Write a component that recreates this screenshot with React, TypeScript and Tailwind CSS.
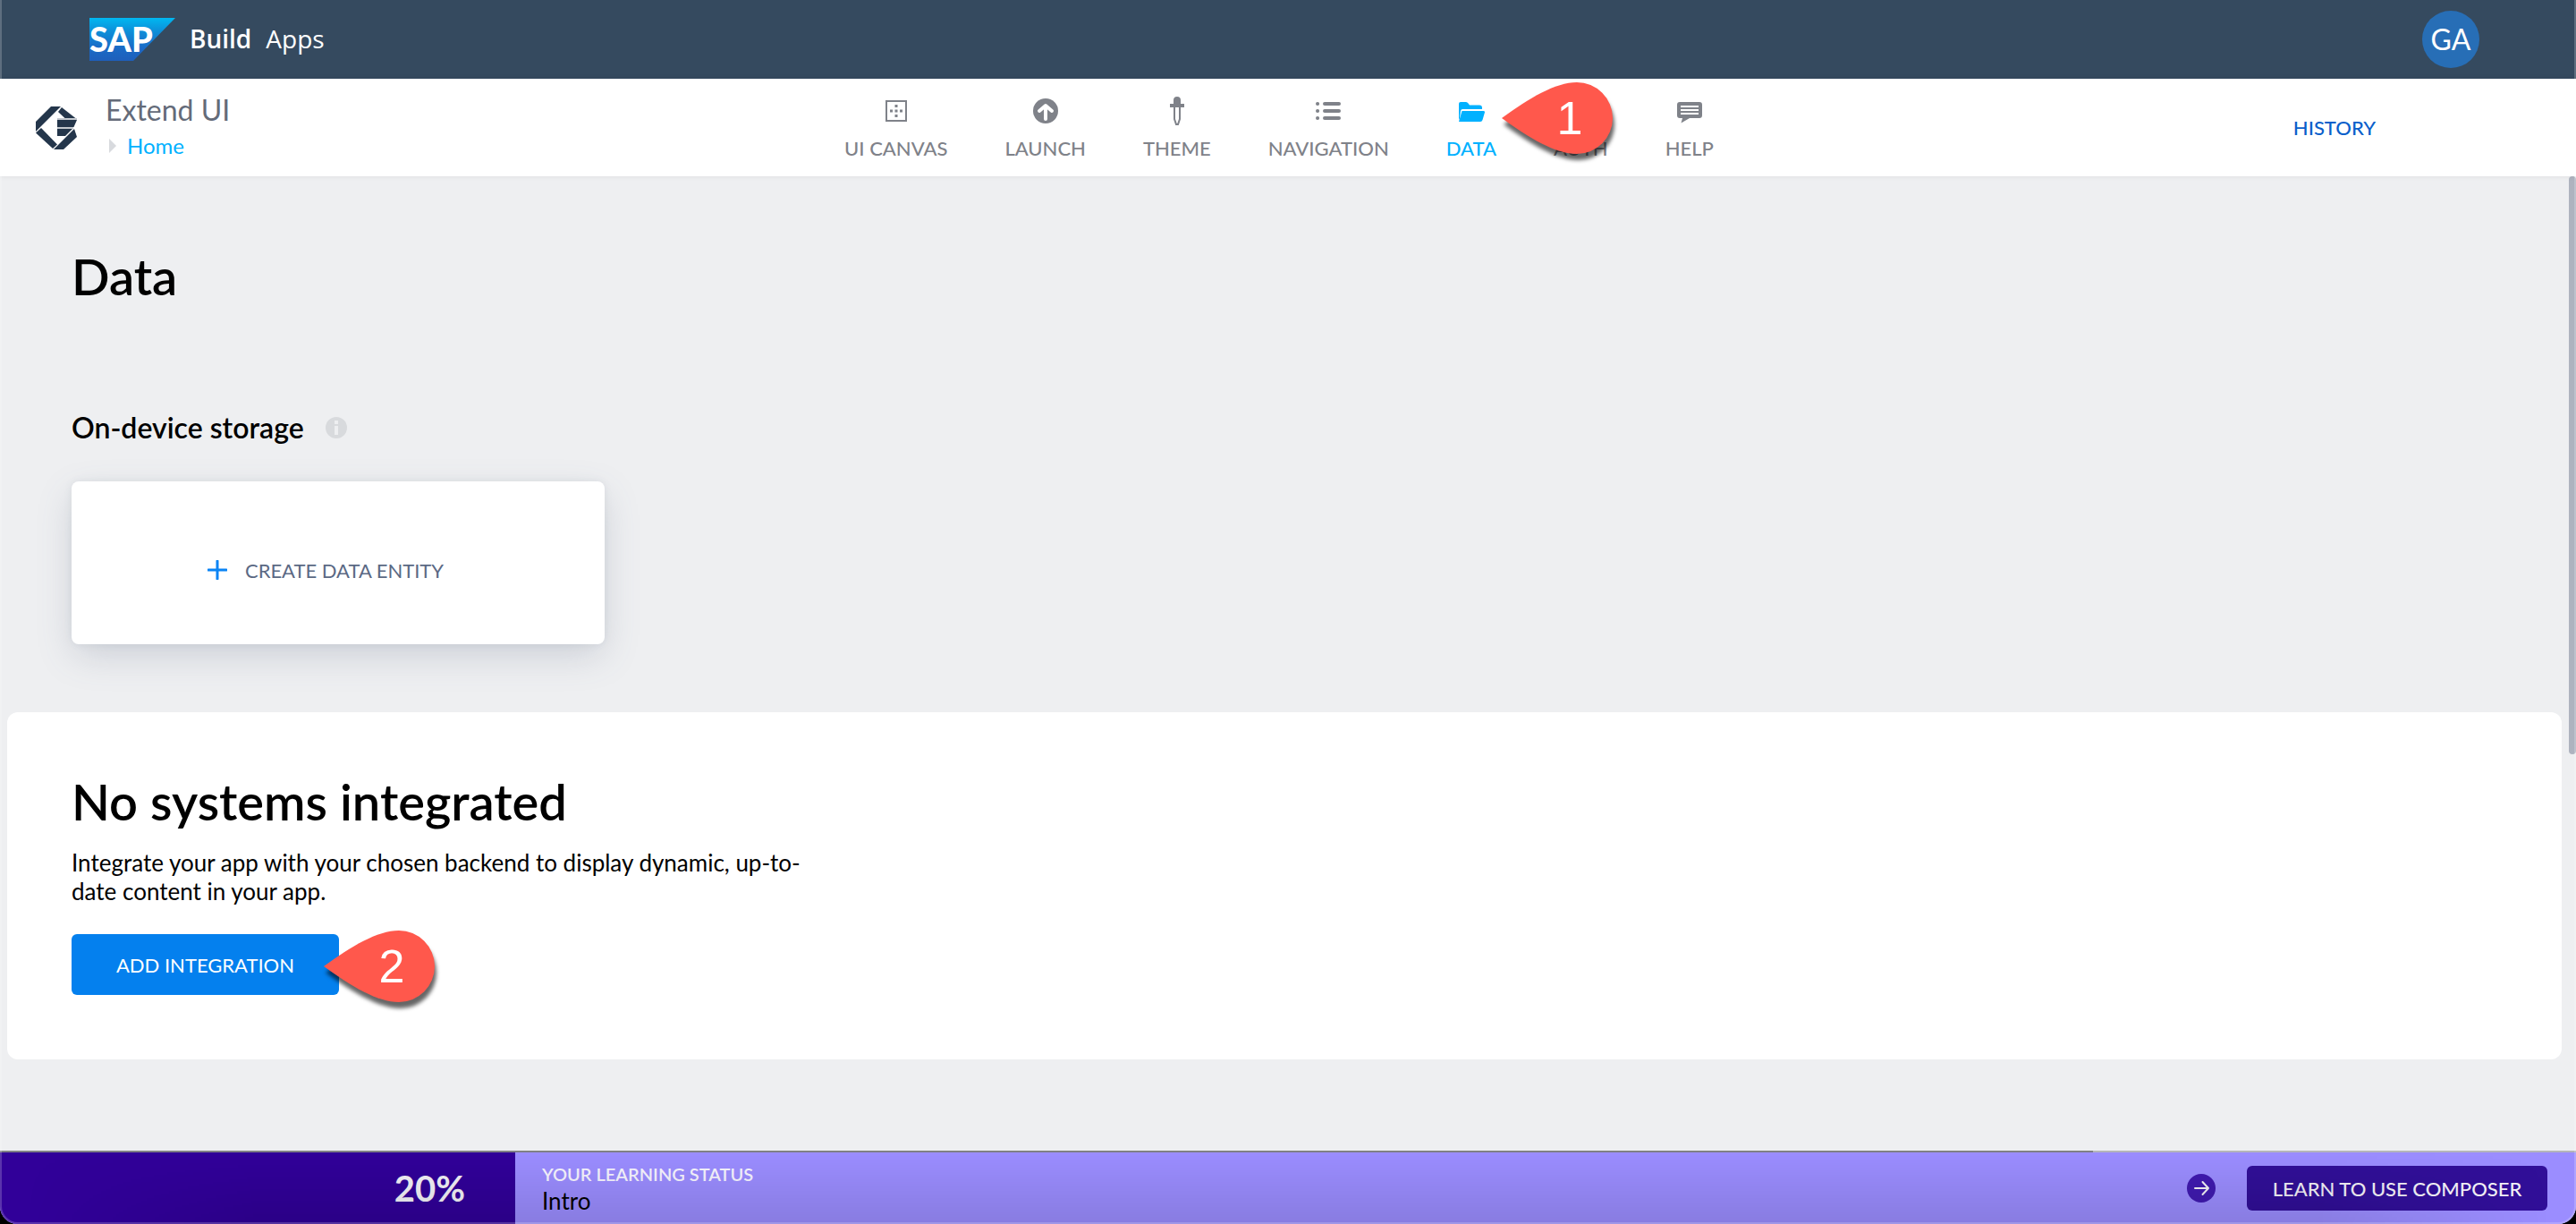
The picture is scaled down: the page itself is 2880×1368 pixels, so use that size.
import type { ReactNode } from "react";

function SapLogo() {
  return (
    <svg width="96" height="48" viewBox="0 0 96 48" role="img" aria-label="SAP" className="overflow-visible">
      <defs>
        <linearGradient id="sap" x1="0" y1="0" x2="0" y2="1">
          <stop offset="0" stopColor="#00b8f1" />
          <stop offset="0.3" stopColor="#0d90d9" />
          <stop offset="0.7" stopColor="#1a6ac6" />
          <stop offset="1" stopColor="#1e5fbb" />
        </linearGradient>
      </defs>
      <path d="M0 0H96L49 48H0Z" fill="url(#sap)" />
      <text x="0" y="38" fontSize="38" fontWeight="900" fill="#fff" fontFamily="Lato, sans-serif">
        SAP
      </text>
    </svg>
  );
}

function AppLogo() {
  return (
    <svg width="46" height="48" viewBox="0 0 46 48" aria-hidden="true">
      <g fill="#24364b">
        <path d="M17 0H28L0 28V17Z" />
        <path d="M29 1L45 13.5H33L25 6Z" />
        <path d="M24 15H46L42.5 23H24Z" />
        <path d="M24 25H41L33 33H24Z" />
        <path d="M6 24L24 42.5L19 47L0 29.5Z" />
        <path d="M43 25L46 34L31 48H20Z" />
      </g>
      <path d="M24 14H46M24 24H42" stroke="#c3c8ce" strokeWidth="2" />
    </svg>
  );
}

const iconBox = { width: 32, height: 32, viewBox: "0 0 32 32", "aria-hidden": true } as const;

const CanvasIcon = () => (
  <svg {...iconBox}>
    <rect x="5" y="5" width="22" height="22" fill="none" stroke="currentColor" strokeWidth="2" />
    <path
      fill="currentColor"
      d="M14.500 9h3v3h-3zM14.500 14.500h3v3h-3zM14.500 20h3v3h-3zM9 14.500h3v3h-3zM20 14.500h3v3h-3z"
    />
  </svg>
);

const LaunchIcon = () => (
  <svg {...iconBox}>
    <circle cx="16" cy="16" r="14" fill="currentColor" />
    <path d="M16 25V11M9 16L16 10L23 16" fill="none" stroke="#fff" strokeWidth="4" strokeLinecap="round" strokeLinejoin="round" />
  </svg>
);

const ThemeIcon = () => (
  <svg {...iconBox}>
    <path d="M12 8V4Q12 0 16 0Q20 0 20 4V8H24V12H8V8Z" fill="currentColor" />
    <path d="M13 12V25L15 31H17L19 25V12" fill="none" stroke="currentColor" strokeWidth="2" />
  </svg>
);

const NavigationIcon = () => (
  <svg {...iconBox}>
    <g stroke="currentColor" strokeWidth="4" strokeLinecap="round">
      <path d="M12 8H28M12 16H28M12 24H28M4 8H4.100M4 16H4.100M4 24H4.100" />
    </g>
  </svg>
);

const DataIcon = () => (
  <svg {...iconBox}>
    <path
      d="M2 26V8Q2 6 4 6H10Q11.500 6 12.500 7.500L14 9.500H25Q28 9.500 28 12.500V14H6Q4.500 14 4 16L3 24Z"
      fill="currentColor"
    />
    <path d="M5.500 16H29.500Q31.500 16 31 17.500L28.500 26Q28 28 26 28H2Z" fill="currentColor" />
  </svg>
);

const AuthIcon = () => (
  <svg {...iconBox}>
    <rect x="6" y="14" width="20" height="14" rx="2" fill="currentColor" />
    <path d="M10 14V10A6 6 0 0 1 22 10V14" fill="none" stroke="currentColor" strokeWidth="3" />
  </svg>
);

const HelpIcon = () => (
  <svg {...iconBox}>
    <path d="M5 6H27Q30 6 30 9V21Q30 24 27 24H16L6.500 29.500L8 24H5Q2 24 2 21V9Q2 6 5 6Z" fill="currentColor" />
    <path d="M6 11H26M6 15H26M6 19H26" stroke="#fff" strokeWidth="2" />
  </svg>
);

const InfoIcon = () => (
  <svg width="24" height="24" viewBox="0 0 24 24" aria-hidden="true">
    <circle cx="12" cy="12" r="12" fill="#d8dadd" />
    <path d="M10 4H14V8H10ZM10 10H14V20H10Z" fill="#eeeff1" />
  </svg>
);

function Marker({ label }: { label: string }) {
  return (
    <span className="pointer-events-none relative flex h-20 w-[124px] items-center justify-center pl-7">
      <svg
        className="absolute inset-0 overflow-visible drop-shadow-[2px_7px_2px_rgba(0,0,0,0.6)]"
        width="124"
        height="80"
        viewBox="0 0 124 80"
        aria-hidden="true"
      >
        <path d="M0 40C30 18 60 0 84 0A40 40 0 0 1 84 80C60 80 30 62 0 40Z" fill="#ff584c" />
      </svg>
      <span className="relative font-['Liberation_Sans',sans-serif] text-[52px] leading-none text-white">{label}</span>
    </span>
  );
}

type Tab = { label: string; icon: ReactNode; active?: boolean; marker?: string };

const tabs: Tab[] = [
  { label: "UI CANVAS", icon: <CanvasIcon /> },
  { label: "LAUNCH", icon: <LaunchIcon /> },
  { label: "THEME", icon: <ThemeIcon /> },
  { label: "NAVIGATION", icon: <NavigationIcon /> },
  { label: "DATA", icon: <DataIcon />, active: true, marker: "1" },
  { label: "AUTH", icon: <AuthIcon /> },
  { label: "HELP", icon: <HelpIcon /> },
];

function SectionTitle({ children }: { children: ReactNode }) {
  return (
    <div className="flex items-center gap-6">
      <h2 className="text-[32px] leading-10 font-semibold">{children}</h2>
      <button type="button" aria-label="More information">
        <InfoIcon />
      </button>
    </div>
  );
}

export default function App() {
  return (
    <div className="h-screen bg-black">
      <div className="relative flex h-full flex-col overflow-hidden rounded-b-[20px] bg-[#eeeff1] font-['Lato',sans-serif] text-black">
        <header className="flex h-[88px] shrink-0 items-center justify-between bg-[#354a5f] pr-[108px] pl-[100px] text-white">
          <div className="flex items-center gap-4">
            <SapLogo />
            <div className="flex gap-4 pb-0.5 font-['Open_Sans',sans-serif] text-[28px] leading-9">
              <span className="font-semibold">Build</span>
              <span>Apps</span>
            </div>
          </div>
          <button type="button" className="size-16 rounded-full bg-[#276eb6] text-[32px]">
            GA
          </button>
        </header>

        <div className="relative z-10 grid h-[109px] shrink-0 grid-cols-[1fr_auto_1fr] items-center bg-white pr-[60px] pl-10 shadow-[0_0_6px_rgba(0,0,0,0.08)]">
          <div className="flex items-center gap-8">
            <AppLogo />
            <div className="pb-1">
              <p className="text-[32px] leading-10 text-[#646b79]">Extend UI</p>
              <div className="mt-1 flex items-center gap-3 pl-1">
                <svg width="8" height="16" viewBox="0 0 8 16" aria-hidden="true">
                  <path d="M0 0L8 8L0 16Z" fill="#d8dade" />
                </svg>
                <a href="#home" className="text-2xl text-[#00b1ff]">
                  Home
                </a>
              </div>
            </div>
          </div>
          <nav className="flex gap-16 pt-0.5">
            {tabs.map((tab) => (
              <div key={tab.label} className="relative">
                <button
                  type="button"
                  className={
                    "flex flex-col items-center gap-3 text-[22px] leading-7 font-medium " +
                    (tab.active ? "text-[#00b1ff]" : "text-[#7f8289]")
                  }
                >
                  {tab.icon}
                  {tab.label}
                </button>
                {tab.marker && (
                  <div className="absolute -top-4 left-full z-10 ml-1.5">
                    <Marker label={tab.marker} />
                  </div>
                )}
              </div>
            ))}
          </nav>
          <div className="flex justify-end pr-[164px]">
            <button type="button" className="text-[22px] leading-7 font-medium text-[#0a5fcb]">
              HISTORY
            </button>
          </div>
        </div>

        <main className="relative min-h-0 flex-1 overflow-hidden pt-20">
          <div className="px-20">
            <h1 className="text-[56px] leading-[64px] font-semibold">Data</h1>
            <section className="mt-[117px]">
              <SectionTitle>On-device storage</SectionTitle>
              <button
                type="button"
                className="mt-10 flex h-[182px] w-[596px] items-center justify-center gap-5 rounded-lg bg-white pt-4 pr-7 text-[22px] text-[#5b6984] shadow-[0_0_8px_rgba(91,105,132,0.10),0_14px_40px_-4px_rgba(91,105,132,0.25)]"
              >
                <svg width="22" height="22" viewBox="0 0 22 22" aria-hidden="true">
                  <path d="M11 1V21M1 11H21" stroke="#0a84f5" strokeWidth="3" strokeLinecap="round" />
                </svg>
                CREATE DATA ENTITY
              </button>
            </section>
          </div>

          <section className="mt-19 mr-4 ml-2 rounded-xl bg-white px-18 pt-17 pb-18">
            <h2 className="text-[56px] leading-[64px] font-semibold">No systems integrated</h2>
            <p className="mt-5 max-w-[830px] text-[26px] leading-8">
              Integrate your app with your chosen backend to display dynamic, up-to-date content in your app.
            </p>
            <div className="relative mt-8 flex">
              <button type="button" className="h-[68px] w-[299px] rounded-md bg-[#0480ee] text-[22px] text-white">
                ADD INTEGRATION
              </button>
              <div className="absolute -top-1 left-[282px]">
                <Marker label="2" />
              </div>
            </div>
          </section>

          <section className="px-20 pt-[94px]">
            <SectionTitle>SAP Build Apps classic data entities</SectionTitle>
          </section>

          <div className="absolute top-0 right-0 h-[646px] w-2 rounded-full bg-[#aeb3bf]" />
        </main>

        <footer className="shrink-0">
          <div className="flex h-0.5 bg-[#b4b5b9]">
            <div className="w-[81.25%] bg-[#808086]" />
          </div>
          <div className="relative flex h-20 items-stretch bg-[#9b8dff]">
            <div className="pointer-events-none absolute inset-0 bg-linear-to-b from-transparent to-black/12 mask-x-from-90% mask-x-to-99%" />
            <div className="flex w-1/5 items-center justify-end bg-[#310099] pr-14 text-[40px] font-bold text-[#f4f2f8]">
              20%
            </div>
            <div className="flex flex-1 flex-col justify-center pt-0.5 pl-[30px]">
              <p className="text-xl leading-6 font-semibold text-[#f7f5ff]">YOUR LEARNING STATUS</p>
              <p className="mt-0.5 text-[26px] leading-8">Intro</p>
            </div>
            <div className="flex items-center gap-[35px] pr-8">
              <button type="button" aria-label="Next lesson" className="size-8 rounded-full bg-[#401ab0]">
                <svg width="32" height="32" viewBox="0 0 32 32" aria-hidden="true">
                  <path
                    d="M9 16H24M17.500 9L24 16L17.500 23"
                    fill="none"
                    stroke="#f4f2f8"
                    strokeWidth="2"
                    strokeLinecap="round"
                    strokeLinejoin="round"
                  />
                </svg>
              </button>
              <button
                type="button"
                className="h-[50px] w-[336px] rounded-md bg-[#310f98] text-[22px] font-medium text-[#f4f2f8]"
              >
                LEARN TO USE COMPOSER
              </button>
            </div>
          </div>
        </footer>

        <div className="pointer-events-none absolute inset-0 z-20 rounded-b-[20px] border-x-2 border-b-2 border-white/20" />
      </div>
    </div>
  );
}
